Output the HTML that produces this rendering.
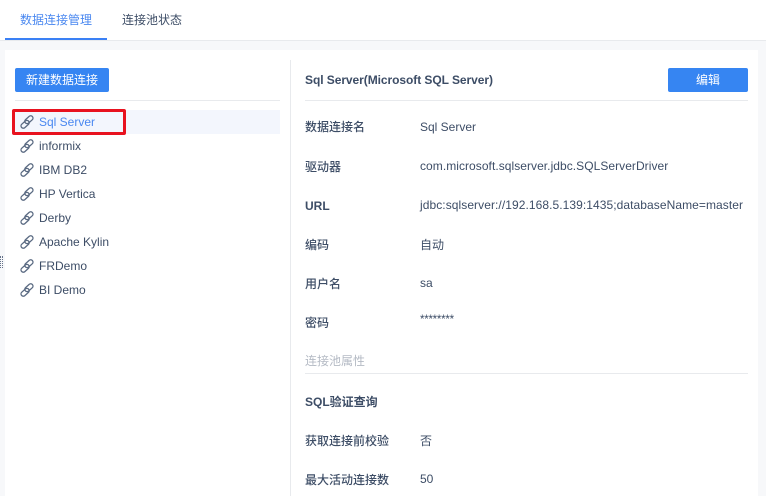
<!DOCTYPE html>
<html><head><meta charset="utf-8">
<style>
html,body{margin:0;padding:0;width:766px;height:496px;overflow:hidden;background:#f7f8fa}
body{position:relative;font-family:"Liberation Sans","Noto Sans CJK SC",sans-serif;font-size:12px;color:#3d4d66}
.a{position:absolute;white-space:nowrap;line-height:16px}
.b{font-weight:bold}
.l{position:absolute;left:20px;width:14px;height:14px}
</style></head><body>
<div class="a" style="left:0;top:0;width:766px;height:40px;background:#fff;border-bottom:1px solid #e8eaed"></div>
<div class="a" style="left:5px;top:38px;width:102px;height:2px;background:#3a80f5"></div>
<div class="a" style="left:20px;top:12px;color:#4a88f0">数据连接管理</div>
<div class="a" style="left:122px;top:12px">连接池状态</div>
<div class="a" style="left:5px;top:50px;width:753px;height:446px;background:#fff"></div>
<div class="a" style="left:15px;top:68px;width:94px;height:24px;background:#3685f2;border-radius:2px;color:#fff;text-align:center;line-height:24px">新建数据连接</div>
<div class="a" style="left:15px;top:100px;width:265px;height:1px;background:#e8eaed"></div>
<div class="a" style="left:15px;top:110px;width:265px;height:24px;background:#f3f6fd"></div>
<div class="a" style="left:12px;top:109px;width:108px;height:20px;border:3px solid #e8121f;border-radius:2px"></div>
<svg width="0" height="0" style="position:absolute"><defs><g id="k" fill="none" stroke="#5a6a82" stroke-width="1.3"><rect x="4.2" y="2.4" width="9.4" height="4.6" rx="2.3" transform="rotate(-42 8.9 4.7)"/><rect x="0.4" y="7" width="9.4" height="4.6" rx="2.3" transform="rotate(-42 5.1 9.3)"/></g></defs></svg>
<svg class="l" style="top:115px" viewBox="0 0 14 14"><use href="#k"/></svg>
<svg class="l" style="top:139px" viewBox="0 0 14 14"><use href="#k"/></svg>
<svg class="l" style="top:163px" viewBox="0 0 14 14"><use href="#k"/></svg>
<svg class="l" style="top:187px" viewBox="0 0 14 14"><use href="#k"/></svg>
<svg class="l" style="top:211px" viewBox="0 0 14 14"><use href="#k"/></svg>
<svg class="l" style="top:235px" viewBox="0 0 14 14"><use href="#k"/></svg>
<svg class="l" style="top:259px" viewBox="0 0 14 14"><use href="#k"/></svg>
<svg class="l" style="top:283px" viewBox="0 0 14 14"><use href="#k"/></svg>
<div class="a" style="left:39px;top:114px;color:#4a88f0">Sql Server</div>
<div class="a" style="left:39px;top:138px">informix</div>
<div class="a" style="left:39px;top:162px">IBM DB2</div>
<div class="a" style="left:39px;top:186px">HP Vertica</div>
<div class="a" style="left:39px;top:210px">Derby</div>
<div class="a" style="left:39px;top:234px">Apache Kylin</div>
<div class="a" style="left:39px;top:258px">FRDemo</div>
<div class="a" style="left:39px;top:282px">BI Demo</div>
<div class="a" style="left:0;top:256px;width:3px;height:12px;border-left:1px dotted #66738a;border-right:1px dotted #66738a;box-sizing:border-box"></div>
<div class="a" style="left:290px;top:60px;width:1px;height:436px;background:#e8eaed"></div>
<div class="a b" style="left:305px;top:72px;letter-spacing:-.06px">Sql Server(Microsoft SQL Server)</div>
<div class="a" style="left:668px;top:68px;width:80px;height:24px;background:#3685f2;border-radius:2px;color:#fff;text-align:center;line-height:24px">编辑</div>
<div class="a" style="left:305px;top:100px;width:443px;height:1px;background:#e8eaed"></div>
<div class="a b" style="left:305px;top:119px;font-weight:500">数据连接名</div><div class="a" style="left:420px;top:119px">Sql Server</div>
<div class="a b" style="left:305px;top:159px;font-weight:500">驱动器</div><div class="a" style="left:420px;top:158px;letter-spacing:.05px">com.microsoft.sqlserver.jdbc.SQLServerDriver</div>
<div class="a b" style="left:305px;top:198px">URL</div><div class="a" style="left:420px;top:197px;letter-spacing:.07px">jdbc:sqlserver://192.168.5.139:1435;databaseName=master</div>
<div class="a b" style="left:305px;top:237px;font-weight:500">编码</div><div class="a" style="left:420px;top:237px">自动</div>
<div class="a b" style="left:305px;top:276px;font-weight:500">用户名</div><div class="a" style="left:420px;top:275px">sa</div>
<div class="a b" style="left:305px;top:315px;font-weight:500">密码</div><div class="a" style="left:420px;top:312px;font-size:11.5px;letter-spacing:-.25px">********</div>
<div class="a" style="left:305px;top:353px;color:#b4bac4">连接池属性</div>
<div class="a" style="left:305px;top:373px;width:443px;height:1px;background:#e8eaed"></div>
<div class="a b" style="left:305px;top:394px">SQL验证查询</div>
<div class="a b" style="left:305px;top:433px;font-weight:500">获取连接前校验</div><div class="a" style="left:420px;top:433px">否</div>
<div class="a b" style="left:305px;top:472px;font-weight:500">最大活动连接数</div><div class="a" style="left:420px;top:471px">50</div>
</body></html>
